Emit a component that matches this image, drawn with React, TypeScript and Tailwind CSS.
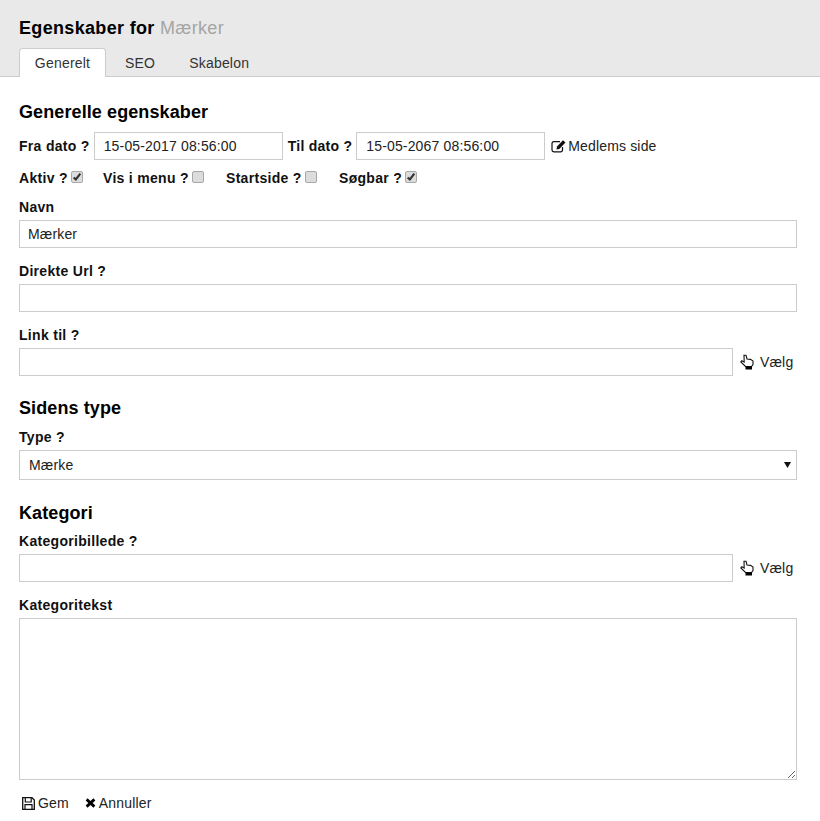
import React from "react";

const inputCls = "h-7 border border-[#ccc] bg-white text-sm tracking-[0.16px] text-[#222] outline-none";

function Label({ children }: { children: React.ReactNode }) {
  return <label className="block h-[17px] text-sm leading-[17px] font-bold tracking-[0.3px] text-[#111]">{children}</label>;
}

function Check({ checked }: { checked?: boolean }) {
  return (
    <span className="mb-[2px] ml-[3px] inline-flex h-3 w-3 items-center justify-center rounded-[2px] border border-[#a8a8a8] bg-[#dcdcdc]">
      {checked && (
        <svg viewBox="0 0 12 12" className="h-[10px] w-[10px]">
          <path d="M2 6.5 L4.6 9 L10 2" fill="none" stroke="#333" strokeWidth="2.6" />
        </svg>
      )}
    </span>
  );
}

function Chk({ label, checked, className }: { label: string; checked?: boolean; className: string }) {
  return (
    <span className={`flex items-center text-sm font-bold tracking-[0.3px] text-[#111] ${className}`}>
      {label}
      <Check checked={checked} />
    </span>
  );
}

function HandIcon() {
  return (
    <svg viewBox="0 0 14 16" className="mr-[6px] h-4 w-[14px]">
      <path d="M4 1.2 L6 1.2 L7 5 L10.5 5.4 L13 7 L13 10.5 L11.5 12.5 L5.5 12.5 L0.8 8 L1.8 6.8 L4.2 8 Z" fill="#fff" stroke="#111" strokeWidth="1.1" />
      <rect x="5.5" y="12.5" width="6.5" height="3" fill="#000" />
    </svg>
  );
}

function EditIcon() {
  return (
    <svg viewBox="0 0 15 14" className="mr-[2px] h-[14px] w-[15px]">
      <path d="M11.5 8 V11 A1.8 1.8 0 0 1 9.7 12.8 H2.8 A1.8 1.8 0 0 1 1 11 V4.5 A1.8 1.8 0 0 1 2.8 2.7 H9" fill="none" stroke="#111" strokeWidth="1.2" />
      <path d="M6 7.5 L12 1.3 L14.5 3.6 L8.3 10 L5.5 10.5 Z" fill="#111" />
    </svg>
  );
}

function SaveIcon() {
  return (
    <svg viewBox="0 0 13 13" className="mr-[3px] h-[13px] w-[13px]">
      <path d="M0.7 0.7 H10 L12.3 3 V12.3 H0.7 Z" fill="none" stroke="#111" strokeWidth="1.3" />
      <path d="M3.3 1 V5 H9.2 V1" fill="none" stroke="#111" strokeWidth="1.2" />
      <path d="M3 12 V7.6 H10 V12" fill="none" stroke="#111" strokeWidth="1.2" />
    </svg>
  );
}

function TimesIcon() {
  return (
    <svg viewBox="0 0 11 10" className="mr-[3px] ml-[16px] h-[10px] w-[11px]">
      <path d="M1.6 1.4 L9.4 8.6 M9.4 1.4 L1.6 8.6" fill="none" stroke="#000" strokeWidth="2.8" />
    </svg>
  );
}

function PickRow() {
  return (
    <div className="flex h-7 items-center">
      <input className={`${inputCls} w-[714px] px-2`} />
      <span className="ml-[7px] flex items-center text-sm tracking-[0.16px] text-[#222]">
        <HandIcon />
        Vælg
      </span>
    </div>
  );
}

export default function App() {
  return (
    <div className="min-h-[821px] bg-white font-['Liberation_Sans',Arial,sans-serif] text-sm text-[#222]">
      <header className="h-[77px] border-b border-[#ccc] bg-[#e9e9e9] px-[19px]">
        <h1 className="h-[48px] pt-[18px] text-lg leading-[21px] font-bold tracking-[0.33px] text-black">
          Egenskaber for <span className="font-normal text-[#a5a5a5]">Mærker</span>
        </h1>
        <nav className="flex h-[29px] text-sm tracking-[0.2px]">
          <span className="flex w-[87px] items-center justify-center rounded-t-[4px] border border-b-0 border-[#ccc] bg-white text-[#333]">
            Generelt
          </span>
          <span className="ml-[19px] flex items-center text-[#333]">SEO</span>
          <span className="ml-[34px] flex items-center text-[#333]">Skabelon</span>
        </nav>
      </header>
      <main className="pr-[23px] pl-[19px]">
        <h2 className="mt-[25px] h-[21px] text-lg leading-[21px] font-bold tracking-[0.1px] text-black">Generelle egenskaber</h2>
        <div className="mt-[9px] flex h-7 items-center text-sm">
          <b className="font-bold tracking-[0.3px] text-[#111]">Fra dato ?</b>
          <input className={`${inputCls} ml-1 w-[189px] px-[9px]`} defaultValue="15-05-2017 08:56:00" />
          <b className="ml-[5px] font-bold tracking-[0.26px] text-[#111]">Til dato ?</b>
          <input className={`${inputCls} ml-1 w-[189px] px-[9px]`} defaultValue="15-05-2067 08:56:00" />
          <span className="ml-[6px] flex items-center tracking-[0.16px] text-[#222]">
            <EditIcon />
            Medlems side
          </span>
        </div>
        <div className="mt-[10px] flex h-4 items-center">
          <Chk label="Aktiv ?" checked className="w-[84px]" />
          <Chk label="Vis i menu ?" className="w-[123px]" />
          <Chk label="Startside ?" className="w-[113px]" />
          <Chk label="Søgbar ?" checked className="" />
        </div>
        <div className="mt-[13px]"><Label>Navn</Label></div>
        <input className={`${inputCls} mt-[4px] block w-full px-2`} defaultValue="Mærker" />
        <div className="mt-[15px]"><Label>Direkte Url ?</Label></div>
        <input className={`${inputCls} mt-[4px] block w-full px-2`} />
        <div className="mt-[15px]"><Label>Link til ?</Label></div>
        <div className="mt-[4px]"><PickRow /></div>
        <h2 className="mt-[22px] h-[21px] text-lg leading-[21px] font-bold tracking-[0.1px] text-black">Sidens type</h2>
        <div className="mt-[10px]"><Label>Type ?</Label></div>
        <div className="relative mt-[4px]">
          <select className="block h-[30px] w-full appearance-none border border-[#ccc] bg-white px-[9px] text-sm tracking-[0.16px] text-[#222] outline-none">
            <option>Mærke</option>
          </select>
          <svg viewBox="0 0 7 6" className="pointer-events-none absolute top-[12px] right-[6px] h-[6px] w-[7px]">
            <path d="M0 0 H7 L3.5 6 Z" fill="#111" />
          </svg>
        </div>
        <h2 className="mt-[23px] h-[21px] text-lg leading-[21px] font-bold tracking-[0.1px] text-black">Kategori</h2>
        <div className="mt-[9px]"><Label>Kategoribillede ?</Label></div>
        <div className="mt-[4px]"><PickRow /></div>
        <div className="mt-[15px]"><Label>Kategoritekst</Label></div>
        <textarea className="mt-[4px] block h-[162px] w-full border border-[#ccc] bg-white p-2 text-sm outline-none" />
        <div className="mt-[15px] flex h-4 items-center pl-[3px] text-sm tracking-[0.16px] text-[#222]">
          <SaveIcon />
          Gem
          <TimesIcon />
          Annuller
        </div>
      </main>
    </div>
  );
}
